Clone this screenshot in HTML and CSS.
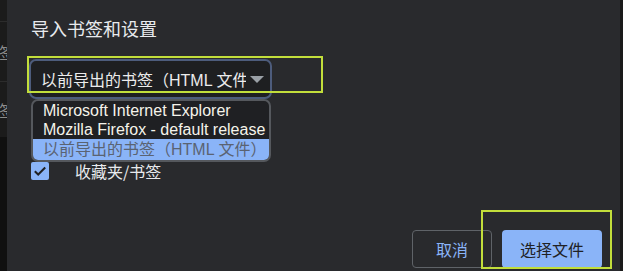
FILE: index.html
```html
<!DOCTYPE html>
<html lang="zh-CN">
<head>
<meta charset="utf-8">
<title>导入书签和设置</title>
<link rel="stylesheet" href="styles.css">
</head>
<body>
<div class="page">
  <div class="side-left">
    <div class="side-top">
      <div class="side-row r1"></div>
      <div class="side-row r2"><span>书签</span></div>
      <div class="side-row r3"><span>书签</span></div>
    </div>
  </div>
  <div class="dialog">
    <div class="title">导入书签和设置</div>
    <div class="select-wrap">
      <div class="select">
        <span class="select-text">以前导出的书签（HTML 文件）</span>
        <svg class="arrow" width="14" height="7" viewBox="0 0 14 7"><path d="M0 0H14L7 7Z" fill="#9aa0a6"/></svg>
      </div>
      <ul class="popup">
        <li class="opt">Microsoft Internet Explorer</li>
        <li class="opt">Mozilla Firefox - default release</li>
        <li class="opt selected">以前导出的书签（HTML 文件）</li>
      </ul>
    </div>
    <label class="check-row">
      <span class="checkbox"><svg width="18" height="18" viewBox="0 0 18 18"><path d="M3.8 9.2L7.2 12.5L14.2 5.5" fill="none" stroke="#202124" stroke-width="2"/></svg></span>
      <span class="check-label">收藏夹/书签</span>
    </label>
    <div class="buttons">
      <button class="btn btn-cancel">取消</button>
      <button class="btn btn-primary">选择文件</button>
    </div>
  </div>
  <div class="side-right"></div>
  <div class="mark mark-select"></div>
  <div class="mark mark-button"></div>
</div>
</body>
</html>
```
FILE: styles.css
```css
* { box-sizing: border-box; }
html, body { margin: 0; padding: 0; }
body {
  width: 623px;
  height: 271px;
  overflow: hidden;
  background: #292a2d;
  font-family: "Liberation Sans", "Noto Sans CJK SC", sans-serif;
}
.page {
  position: relative;
  display: flex;
  width: 623px;
  height: 271px;
}
.side-left {
  width: 7px;
  flex: none;
  background: #101010;
  display: flex;
  flex-direction: column;
}
.side-top {
  height: 137px;
  background: #1b1b1b;
  display: flex;
  flex-direction: column;
}
.side-row {
  display: flex;
  justify-content: flex-end;
  align-items: center;
  overflow: hidden;
  border-bottom: 1px solid #2c2c2c;
  color: #8c8c8c;
  font-family: "Noto Sans CJK SC", sans-serif;
  font-size: 16px;
  white-space: nowrap;
}
.side-row span { margin-right: -8px; }
.r1 { height: 22px; }
.r2 { height: 60px; }
.r3 { flex: 1; border-bottom: 0; }
.side-right {
  width: 3px;
  flex: none;
  background: #1a1a1a;
}
.dialog {
  flex: 1;
  display: flex;
  flex-direction: column;
  padding: 16px 18px 3px 22px;
  color: #e8eaed;
}
.title {
  font-family: "Noto Sans CJK SC", sans-serif;
  font-size: 18px;
  line-height: 24px;
  height: 24px;
  margin-left: 2px;
  color: #e8eaed;
}
.select-wrap {
  position: relative;
  margin-top: 19px;
  width: 243px;
}
.select {
  display: flex;
  align-items: center;
  height: 40px;
  width: 243px;
  padding: 0 6px 0 10px;
  border: 2px solid #4d5c7c;
  border-radius: 7px;
  background: #1e1f21;
}
.select-text {
  width: 205px;
  overflow: hidden;
  white-space: nowrap;
  font-size: 16px;
  color: #ececec;
}
.arrow { margin-left: 4px; flex: none; }
.popup {
  position: absolute;
  left: 2px;
  top: 40px;
  width: 240px;
  margin: 0;
  padding: 0;
  list-style: none;
  border: 2px solid #55585d;
  border-radius: 7px;
  overflow: hidden;
  background: #1f2023;
}
.opt {
  height: 19px;
  line-height: 19px;
  padding-left: 10px;
  font-size: 16px;
  color: #f5f3ea;
  white-space: nowrap;
}
.opt.selected {
  height: 21px;
  line-height: 21px;
  background: #8ab4f8;
  color: #5a6372;
}
.check-row {
  display: flex;
  align-items: center;
  gap: 26px;
  margin-top: 63px;
  margin-left: 2px;
  height: 18px;
}
.checkbox {
  width: 18px;
  height: 18px;
  border-radius: 2px;
  background: #8ab4f8;
  display: flex;
}
.check-label {
  font-family: "Noto Sans CJK SC", sans-serif;
  font-size: 16px;
  line-height: 18px;
  color: #e8eaed;
}
.buttons {
  margin-top: auto;
  display: flex;
  justify-content: flex-end;
  gap: 10px;
}
.btn {
  height: 38px;
  border-radius: 4px;
  font-family: "Noto Sans CJK SC", sans-serif;
  font-size: 16px;
  padding: 0;
}
.btn-cancel {
  width: 80px;
  background: transparent;
  border: 1px solid #5f6368;
  color: #8ab4f8;
}
.btn-primary {
  width: 100px;
  background: #8ab4f8;
  border: 0;
  color: #202124;
}
.mark {
  position: absolute;
  border: 2px solid #c2de3b;
  pointer-events: none;
}
.mark-select { left: 27px; top: 56px; width: 296px; height: 37px; }
.mark-button { left: 481px; top: 210px; width: 131px; height: 59px; }
```
